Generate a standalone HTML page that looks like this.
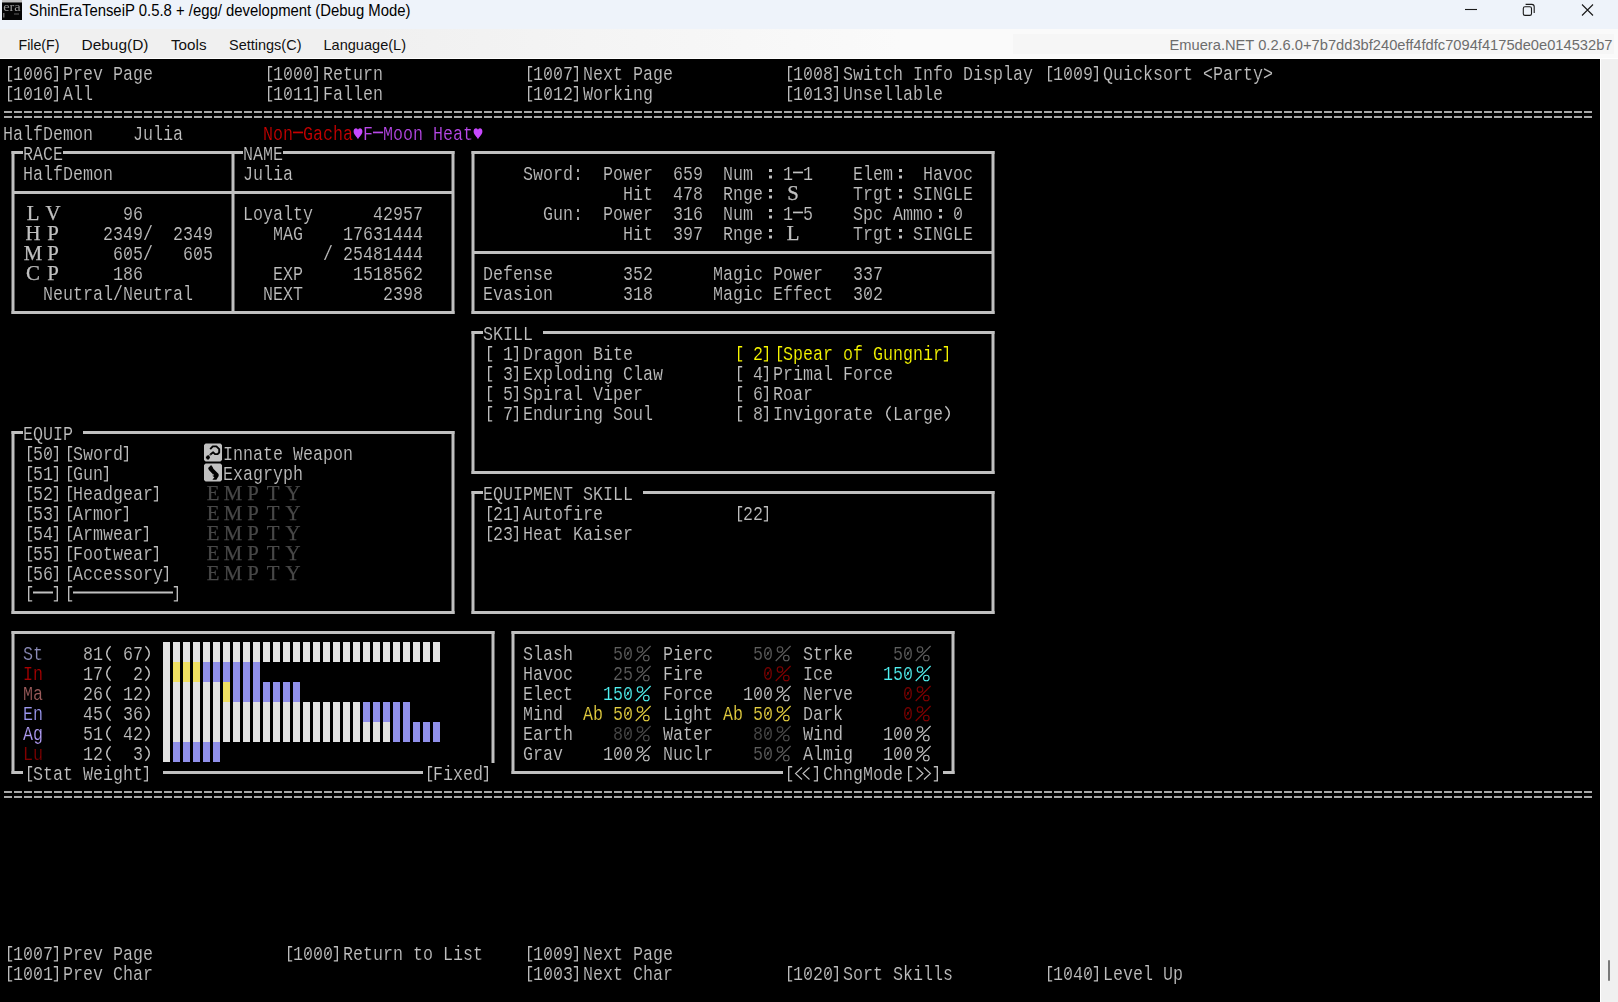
<!DOCTYPE html>
<html><head><meta charset="utf-8"><title>ShinEraTenseiP</title>
<style>
html,body{margin:0;padding:0;}
body{width:1618px;height:1002px;overflow:hidden;background:#000;position:relative;font-family:"Liberation Sans",sans-serif;}
#title{position:absolute;left:0;top:0;width:1618px;height:29px;background:#eef3fa;}
#menu{position:absolute;left:0;top:29px;width:1618px;height:30px;background:linear-gradient(90deg,#f0f0f0 0,#f0f0f0 380px,#fafafa 900px,#fafafa 100%);border-bottom:1px solid #fff;box-sizing:border-box;}
#title .tt{position:absolute;left:29px;top:1px;font-size:16.3px;line-height:20px;transform:scaleX(.9145);color:#000;white-space:pre;transform-origin:0 0;}
#menu span,#vv{position:absolute;top:7px;font-size:15px;line-height:18px;color:#111;white-space:pre;transform-origin:0 0;}
#ver{position:absolute;left:1013px;top:34px;width:600.5px;height:20px;background:#f6f6f6;}
#ver span{position:absolute;right:0;top:2px;color:#6d6d6d;transform-origin:100% 0;transform:scaleX(.976);line-height:18px;white-space:pre;}
#term{position:absolute;left:0;top:59px;width:1600px;height:943px;background:#000;}
#sb{position:absolute;left:1600px;top:59px;width:18px;height:943px;background:#f0f0f0;border-left:1px solid #fff;box-sizing:border-box;}
#sb i{position:absolute;left:7px;top:901px;width:2px;height:21px;background:#7a7a7a;border-radius:1px;}
.t,.fw{position:absolute;white-space:pre;color:#c0c0c0;font-size:20px;line-height:20px;height:20px;}
.t{font-family:"Liberation Mono",monospace;transform:scaleX(.8333);transform-origin:0 0;padding-top:2px;-webkit-text-stroke:.18px #000;}
.fw{font-family:"Liberation Serif",serif;width:20px;text-align:center;padding-top:0px;transform:scaleX(1.04);-webkit-text-stroke-width:.25px;color:#c0c0c0;}
svg#g{position:absolute;left:0;top:0;width:1618px;height:1002px;pointer-events:none;}
</style></head>
<body>
<div id="term"></div>
<div id="title">
<svg style="position:absolute;left:2px;top:0" width="20" height="20" viewBox="0 0 20 20"><defs><filter id="bl" x="-20%" y="-20%" width="140%" height="140%"><feGaussianBlur stdDeviation="0.45"/></filter></defs><rect x="0" y="0" width="20" height="20" fill="#050505"/><rect x="0" y="0" width="20" height="2" fill="#c0c0c0"/><rect x="0" y="2" width="20" height="1" fill="#5a5a5a"/><g filter="url(#bl)"><text x="1.200" y="10.800" font-family="Liberation Serif" font-size="11.500" fill="#9a9a9a" textLength="17.500" lengthAdjust="spacingAndGlyphs">era</text><rect x="1" y="13" width="1.500" height="4.500" fill="#6a6a6a"/><rect x="12" y="13" width="5" height="2" fill="#303030"/></g></svg>
<svg style="position:absolute;left:1460px;top:0" width="158" height="30" viewBox="0 0 158 30" fill="none" stroke="#1a1a1a" stroke-width="1.1">
<path d="M5 9.5H17"/>
<rect x="63.300" y="6.800" width="8.200" height="8.600" rx="1.700"/><path d="M65.600 4.400H71.800A2.400 2.400 0 0 1 74.200 6.800V13"/>
<path d="M122 4.500L133 15.500M133 4.500L122 15.500"/>
</svg>
</div>
<div id="menu"></div>
<div id="ver"></div>
<svg id="top" width="1618" height="59" viewBox="0 0 1618 59" style="position:absolute;left:0;top:0" font-family="Liberation Sans, sans-serif">
<text x="29" y="16.100" font-size="15.700" fill="#000" textLength="381.500" lengthAdjust="spacingAndGlyphs">ShinEraTenseiP 0.5.8 + /egg/ development (Debug Mode)</text>
<g font-size="15" fill="#111">
<text x="18.500" y="49.600" textLength="41" lengthAdjust="spacingAndGlyphs">File(F)</text>
<text x="81.500" y="49.600" textLength="67" lengthAdjust="spacingAndGlyphs">Debug(D)</text>
<text x="171" y="49.600" textLength="35.500" lengthAdjust="spacingAndGlyphs">Tools</text>
<text x="229" y="49.600" textLength="72.500" lengthAdjust="spacingAndGlyphs">Settings(C)</text>
<text x="323.500" y="49.600" textLength="82.500" lengthAdjust="spacingAndGlyphs">Language(L)</text>
</g>
<text x="1169.500" y="50" font-size="15" fill="#6d6d6d" textLength="443" lengthAdjust="spacingAndGlyphs">Emuera.NET 0.2.6.0+7b7dd3bf240eff4fdfc7094f4175de0e014532b7</text>
</svg>
<div id="sb"><i></i></div>
<span class="t" style="left:13px;top:63px;">1006 Prev Page</span>
<span class="t" style="left:273px;top:63px;">1000 Return</span>
<span class="t" style="left:533px;top:63px;">1007 Next Page</span>
<span class="t" style="left:793px;top:63px;">1008 Switch Info Display</span>
<span class="t" style="left:1053px;top:63px;">1009 Quicksort &lt;Party&gt;</span>
<span class="t" style="left:13px;top:83px;">1010 All</span>
<span class="t" style="left:273px;top:83px;">1011 Fallen</span>
<span class="t" style="left:533px;top:83px;">1012 Working</span>
<span class="t" style="left:793px;top:83px;">1013 Unsellable</span>
<span class="t" style="left:3px;top:123px;">HalfDemon</span>
<span class="t" style="left:133px;top:123px;">Julia</span>
<span class="t" style="left:263px;top:123px;color:#c80000;">Non</span>
<span class="t" style="left:303px;top:123px;color:#c80000;">Gacha</span>
<span class="t" style="left:363px;top:123px;color:#b848e8;">F</span>
<span class="t" style="left:383px;top:123px;color:#b848e8;">Moon Heat</span>
<span class="t" style="left:23px;top:143px;">RACE</span>
<span class="t" style="left:243px;top:143px;">NAME</span>
<span class="t" style="left:23px;top:163px;">HalfDemon</span>
<span class="t" style="left:243px;top:163px;">Julia</span>
<span class="fw" style="left:23px;top:203px;">L</span>
<span class="fw" style="left:43px;top:203px;">V</span>
<span class="t" style="left:123px;top:203px;">96</span>
<span class="t" style="left:243px;top:203px;">Loyalty</span>
<span class="t" style="left:373px;top:203px;">42957</span>
<span class="fw" style="left:23px;top:223px;">H</span>
<span class="fw" style="left:43px;top:223px;">P</span>
<span class="t" style="left:103px;top:223px;">2349/</span>
<span class="t" style="left:173px;top:223px;">2349</span>
<span class="t" style="left:273px;top:223px;">MAG</span>
<span class="t" style="left:343px;top:223px;">17631444</span>
<span class="fw" style="left:23px;top:243px;">M</span>
<span class="fw" style="left:43px;top:243px;">P</span>
<span class="t" style="left:113px;top:243px;">605/</span>
<span class="t" style="left:183px;top:243px;">605</span>
<span class="t" style="left:323px;top:243px;">/ 25481444</span>
<span class="fw" style="left:23px;top:263px;">C</span>
<span class="fw" style="left:43px;top:263px;">P</span>
<span class="t" style="left:113px;top:263px;">186</span>
<span class="t" style="left:273px;top:263px;">EXP</span>
<span class="t" style="left:353px;top:263px;">1518562</span>
<span class="t" style="left:43px;top:283px;">Neutral/Neutral</span>
<span class="t" style="left:263px;top:283px;">NEXT</span>
<span class="t" style="left:383px;top:283px;">2398</span>
<span class="t" style="left:523px;top:163px;">Sword:</span>
<span class="t" style="left:603px;top:163px;">Power</span>
<span class="t" style="left:673px;top:163px;">659</span>
<span class="t" style="left:723px;top:163px;">Num</span>
<span class="t" style="left:783px;top:163px;">1</span>
<span class="t" style="left:803px;top:163px;">1</span>
<span class="t" style="left:853px;top:163px;">Elem</span>
<span class="t" style="left:923px;top:163px;">Havoc</span>
<span class="t" style="left:623px;top:183px;">Hit</span>
<span class="t" style="left:673px;top:183px;">478</span>
<span class="t" style="left:723px;top:183px;">Rnge</span>
<span class="fw" style="left:783px;top:183px;">S</span>
<span class="t" style="left:853px;top:183px;">Trgt</span>
<span class="t" style="left:913px;top:183px;">SINGLE</span>
<span class="t" style="left:543px;top:203px;">Gun:</span>
<span class="t" style="left:603px;top:203px;">Power</span>
<span class="t" style="left:673px;top:203px;">316</span>
<span class="t" style="left:723px;top:203px;">Num</span>
<span class="t" style="left:783px;top:203px;">1</span>
<span class="t" style="left:803px;top:203px;">5</span>
<span class="t" style="left:853px;top:203px;">Spc Ammo</span>
<span class="t" style="left:953px;top:203px;">0</span>
<span class="t" style="left:623px;top:223px;">Hit</span>
<span class="t" style="left:673px;top:223px;">397</span>
<span class="t" style="left:723px;top:223px;">Rnge</span>
<span class="fw" style="left:783px;top:223px;">L</span>
<span class="t" style="left:853px;top:223px;">Trgt</span>
<span class="t" style="left:913px;top:223px;">SINGLE</span>
<span class="t" style="left:483px;top:263px;">Defense</span>
<span class="t" style="left:623px;top:263px;">352</span>
<span class="t" style="left:713px;top:263px;">Magic Power</span>
<span class="t" style="left:853px;top:263px;">337</span>
<span class="t" style="left:483px;top:283px;">Evasion</span>
<span class="t" style="left:623px;top:283px;">318</span>
<span class="t" style="left:713px;top:283px;">Magic Effect</span>
<span class="t" style="left:853px;top:283px;">302</span>
<span class="t" style="left:483px;top:323px;">SKILL</span>
<span class="t" style="left:503px;top:343px;">1 Dragon Bite</span>
<span class="t" style="left:753px;top:343px;color:#fafa00;">2</span>
<span class="t" style="left:783px;top:343px;color:#fafa00;">Spear of Gungnir</span>
<span class="t" style="left:503px;top:363px;">3 Exploding Claw</span>
<span class="t" style="left:753px;top:363px;">4 Primal Force</span>
<span class="t" style="left:503px;top:383px;">5 Spiral Viper</span>
<span class="t" style="left:753px;top:383px;">6 Roar</span>
<span class="t" style="left:503px;top:403px;">7 Enduring Soul</span>
<span class="t" style="left:753px;top:403px;">8 Invigorate</span>
<span class="t" style="left:893px;top:403px;">Large</span>
<span class="t" style="left:23px;top:423px;">EQUIP</span>
<span class="t" style="left:33px;top:443px;">50</span>
<span class="t" style="left:73px;top:443px;">Sword</span>
<span class="t" style="left:33px;top:463px;">51</span>
<span class="t" style="left:73px;top:463px;">Gun</span>
<span class="t" style="left:33px;top:483px;">52</span>
<span class="t" style="left:73px;top:483px;">Headgear</span>
<span class="fw" style="left:203px;top:483px;color:#484848;">E</span>
<span class="fw" style="left:223px;top:483px;color:#484848;">M</span>
<span class="fw" style="left:243px;top:483px;color:#484848;">P</span>
<span class="fw" style="left:263px;top:483px;color:#484848;">T</span>
<span class="fw" style="left:283px;top:483px;color:#484848;">Y</span>
<span class="t" style="left:33px;top:503px;">53</span>
<span class="t" style="left:73px;top:503px;">Armor</span>
<span class="fw" style="left:203px;top:503px;color:#484848;">E</span>
<span class="fw" style="left:223px;top:503px;color:#484848;">M</span>
<span class="fw" style="left:243px;top:503px;color:#484848;">P</span>
<span class="fw" style="left:263px;top:503px;color:#484848;">T</span>
<span class="fw" style="left:283px;top:503px;color:#484848;">Y</span>
<span class="t" style="left:33px;top:523px;">54</span>
<span class="t" style="left:73px;top:523px;">Armwear</span>
<span class="fw" style="left:203px;top:523px;color:#484848;">E</span>
<span class="fw" style="left:223px;top:523px;color:#484848;">M</span>
<span class="fw" style="left:243px;top:523px;color:#484848;">P</span>
<span class="fw" style="left:263px;top:523px;color:#484848;">T</span>
<span class="fw" style="left:283px;top:523px;color:#484848;">Y</span>
<span class="t" style="left:33px;top:543px;">55</span>
<span class="t" style="left:73px;top:543px;">Footwear</span>
<span class="fw" style="left:203px;top:543px;color:#484848;">E</span>
<span class="fw" style="left:223px;top:543px;color:#484848;">M</span>
<span class="fw" style="left:243px;top:543px;color:#484848;">P</span>
<span class="fw" style="left:263px;top:543px;color:#484848;">T</span>
<span class="fw" style="left:283px;top:543px;color:#484848;">Y</span>
<span class="t" style="left:33px;top:563px;">56</span>
<span class="t" style="left:73px;top:563px;">Accessory</span>
<span class="fw" style="left:203px;top:563px;color:#484848;">E</span>
<span class="fw" style="left:223px;top:563px;color:#484848;">M</span>
<span class="fw" style="left:243px;top:563px;color:#484848;">P</span>
<span class="fw" style="left:263px;top:563px;color:#484848;">T</span>
<span class="fw" style="left:283px;top:563px;color:#484848;">Y</span>
<span class="t" style="left:223px;top:443px;">Innate Weapon</span>
<span class="t" style="left:223px;top:463px;">Exagryph</span>
<span class="t" style="left:483px;top:483px;">EQUIPMENT SKILL</span>
<span class="t" style="left:493px;top:503px;">21 Autofire</span>
<span class="t" style="left:743px;top:503px;">22</span>
<span class="t" style="left:493px;top:523px;">23 Heat Kaiser</span>
<span class="t" style="left:33px;top:763px;">Stat Weight</span>
<span class="t" style="left:433px;top:763px;">Fixed</span>
<span class="t" style="left:23px;top:643px;color:#8c8cb8;">St</span>
<span class="t" style="left:83px;top:643px;">81</span>
<span class="t" style="left:123px;top:643px;">67</span>
<span class="t" style="left:23px;top:663px;color:#a80000;">In</span>
<span class="t" style="left:83px;top:663px;">17</span>
<span class="t" style="left:133px;top:663px;">2</span>
<span class="t" style="left:23px;top:683px;color:#9c5c5c;">Ma</span>
<span class="t" style="left:83px;top:683px;">26</span>
<span class="t" style="left:123px;top:683px;">12</span>
<span class="t" style="left:23px;top:703px;color:#9c98f0;">En</span>
<span class="t" style="left:83px;top:703px;">45</span>
<span class="t" style="left:123px;top:703px;">36</span>
<span class="t" style="left:23px;top:723px;color:#b09cf4;">Ag</span>
<span class="t" style="left:83px;top:723px;">51</span>
<span class="t" style="left:123px;top:723px;">42</span>
<span class="t" style="left:23px;top:743px;color:#800000;">Lu</span>
<span class="t" style="left:83px;top:743px;">12</span>
<span class="t" style="left:133px;top:743px;">3</span>
<span class="t" style="left:823px;top:763px;">ChngMode</span>
<span class="t" style="left:523px;top:643px;">Slash</span>
<span class="t" style="left:613px;top:643px;color:#5e5e5e;">50</span>
<span class="t" style="left:663px;top:643px;">Pierc</span>
<span class="t" style="left:753px;top:643px;color:#5e5e5e;">50</span>
<span class="t" style="left:803px;top:643px;">Strke</span>
<span class="t" style="left:893px;top:643px;color:#5e5e5e;">50</span>
<span class="t" style="left:523px;top:663px;">Havoc</span>
<span class="t" style="left:613px;top:663px;color:#5e5e5e;">25</span>
<span class="t" style="left:663px;top:663px;">Fire</span>
<span class="t" style="left:763px;top:663px;color:#800000;">0</span>
<span class="t" style="left:803px;top:663px;">Ice</span>
<span class="t" style="left:883px;top:663px;color:#50f0f0;">150</span>
<span class="t" style="left:523px;top:683px;">Elect</span>
<span class="t" style="left:603px;top:683px;color:#50f0f0;">150</span>
<span class="t" style="left:663px;top:683px;">Force</span>
<span class="t" style="left:743px;top:683px;color:#c0c0c0;">100</span>
<span class="t" style="left:803px;top:683px;">Nerve</span>
<span class="t" style="left:903px;top:683px;color:#800000;">0</span>
<span class="t" style="left:523px;top:703px;">Mind</span>
<span class="t" style="left:583px;top:703px;color:#e6d040;">Ab 50</span>
<span class="t" style="left:663px;top:703px;">Light</span>
<span class="t" style="left:723px;top:703px;color:#e6d040;">Ab 50</span>
<span class="t" style="left:803px;top:703px;">Dark</span>
<span class="t" style="left:903px;top:703px;color:#800000;">0</span>
<span class="t" style="left:523px;top:723px;">Earth</span>
<span class="t" style="left:613px;top:723px;color:#4c4c4c;">80</span>
<span class="t" style="left:663px;top:723px;">Water</span>
<span class="t" style="left:753px;top:723px;color:#4c4c4c;">80</span>
<span class="t" style="left:803px;top:723px;">Wind</span>
<span class="t" style="left:883px;top:723px;color:#c0c0c0;">100</span>
<span class="t" style="left:523px;top:743px;">Grav</span>
<span class="t" style="left:603px;top:743px;color:#c0c0c0;">100</span>
<span class="t" style="left:663px;top:743px;">Nuclr</span>
<span class="t" style="left:753px;top:743px;color:#5e5e5e;">50</span>
<span class="t" style="left:803px;top:743px;">Almig</span>
<span class="t" style="left:883px;top:743px;color:#c0c0c0;">100</span>
<span class="t" style="left:13px;top:943px;">1007 Prev Page</span>
<span class="t" style="left:293px;top:943px;">1000 Return to List</span>
<span class="t" style="left:533px;top:943px;">1009 Next Page</span>
<span class="t" style="left:13px;top:963px;">1001 Prev Char</span>
<span class="t" style="left:533px;top:963px;">1003 Next Char</span>
<span class="t" style="left:793px;top:963px;">1020 Sort Skills</span>
<span class="t" style="left:1053px;top:963px;">1040 Level Up</span>
<svg id="g" viewBox="0 0 1618 1002">
<path d="M12.2 66.7H8.7V80.8H12.2" stroke="#c0c0c0" stroke-width="1.35" fill="none"/>
<path d="M53.8 66.7H57.3V80.8H53.8" stroke="#c0c0c0" stroke-width="1.35" fill="none"/>
<path d="M26.3 76L30.2 70" stroke="#c0c0c0" stroke-width="1" stroke-opacity=".85" fill="none"/>
<path d="M36.3 76L40.2 70" stroke="#c0c0c0" stroke-width="1" stroke-opacity=".85" fill="none"/>
<path d="M272.2 66.7H268.7V80.8H272.2" stroke="#c0c0c0" stroke-width="1.35" fill="none"/>
<path d="M313.8 66.7H317.3V80.8H313.8" stroke="#c0c0c0" stroke-width="1.35" fill="none"/>
<path d="M286.3 76L290.2 70" stroke="#c0c0c0" stroke-width="1" stroke-opacity=".85" fill="none"/>
<path d="M296.3 76L300.2 70" stroke="#c0c0c0" stroke-width="1" stroke-opacity=".85" fill="none"/>
<path d="M306.3 76L310.2 70" stroke="#c0c0c0" stroke-width="1" stroke-opacity=".85" fill="none"/>
<path d="M532.2 66.7H528.7V80.8H532.2" stroke="#c0c0c0" stroke-width="1.35" fill="none"/>
<path d="M573.8 66.7H577.3V80.8H573.8" stroke="#c0c0c0" stroke-width="1.35" fill="none"/>
<path d="M546.3 76L550.2 70" stroke="#c0c0c0" stroke-width="1" stroke-opacity=".85" fill="none"/>
<path d="M556.3 76L560.2 70" stroke="#c0c0c0" stroke-width="1" stroke-opacity=".85" fill="none"/>
<path d="M792.2 66.7H788.7V80.8H792.2" stroke="#c0c0c0" stroke-width="1.35" fill="none"/>
<path d="M833.8 66.7H837.3V80.8H833.8" stroke="#c0c0c0" stroke-width="1.35" fill="none"/>
<path d="M806.3 76L810.2 70" stroke="#c0c0c0" stroke-width="1" stroke-opacity=".85" fill="none"/>
<path d="M816.3 76L820.2 70" stroke="#c0c0c0" stroke-width="1" stroke-opacity=".85" fill="none"/>
<path d="M1052.2 66.7H1048.7V80.8H1052.2" stroke="#c0c0c0" stroke-width="1.35" fill="none"/>
<path d="M1093.8 66.7H1097.3V80.8H1093.8" stroke="#c0c0c0" stroke-width="1.35" fill="none"/>
<path d="M1066.3 76L1070.2 70" stroke="#c0c0c0" stroke-width="1" stroke-opacity=".85" fill="none"/>
<path d="M1076.3 76L1080.2 70" stroke="#c0c0c0" stroke-width="1" stroke-opacity=".85" fill="none"/>
<path d="M12.2 86.7H8.7V100.8H12.2" stroke="#c0c0c0" stroke-width="1.35" fill="none"/>
<path d="M53.8 86.7H57.3V100.8H53.8" stroke="#c0c0c0" stroke-width="1.35" fill="none"/>
<path d="M26.3 96L30.2 90" stroke="#c0c0c0" stroke-width="1" stroke-opacity=".85" fill="none"/>
<path d="M46.3 96L50.2 90" stroke="#c0c0c0" stroke-width="1" stroke-opacity=".85" fill="none"/>
<path d="M272.2 86.7H268.7V100.8H272.2" stroke="#c0c0c0" stroke-width="1.35" fill="none"/>
<path d="M313.8 86.7H317.3V100.8H313.8" stroke="#c0c0c0" stroke-width="1.35" fill="none"/>
<path d="M286.3 96L290.2 90" stroke="#c0c0c0" stroke-width="1" stroke-opacity=".85" fill="none"/>
<path d="M532.2 86.7H528.7V100.8H532.2" stroke="#c0c0c0" stroke-width="1.35" fill="none"/>
<path d="M573.8 86.7H577.3V100.8H573.8" stroke="#c0c0c0" stroke-width="1.35" fill="none"/>
<path d="M546.3 96L550.2 90" stroke="#c0c0c0" stroke-width="1" stroke-opacity=".85" fill="none"/>
<path d="M792.2 86.7H788.7V100.8H792.2" stroke="#c0c0c0" stroke-width="1.35" fill="none"/>
<path d="M833.8 86.7H837.3V100.8H833.8" stroke="#c0c0c0" stroke-width="1.35" fill="none"/>
<path d="M806.3 96L810.2 90" stroke="#c0c0c0" stroke-width="1" stroke-opacity=".85" fill="none"/>
<path d="M4 112H1593M4 117H1593" stroke="#a8a8a8" stroke-width="2" stroke-dasharray="8 2" fill="none"/>
<path d="M4 792H1593M4 797H1593" stroke="#a8a8a8" stroke-width="2" stroke-dasharray="8 2" fill="none"/>
<path d="M293 131.6h10v1.7h-10z" fill="#c80000"/>
<path transform="translate(353.6,128.2)" fill="#c848ff" d="M4.4 11 C3.6 8.6 0 6.6 0 3.2 C0 1.2 1.2 0 2.4 0 C3.5 0 4.1 0.8 4.4 1.6 C4.7 0.8 5.3 0 6.4 0 C7.6 0 8.8 1.2 8.8 3.2 C8.8 6.6 5.2 8.6 4.4 11Z"/>
<path d="M373 131.6h10v1.7h-10z" fill="#b848e8"/>
<path transform="translate(473.6,128.2)" fill="#c848ff" d="M4.4 11 C3.6 8.6 0 6.6 0 3.2 C0 1.2 1.2 0 2.4 0 C3.5 0 4.1 0.8 4.4 1.6 C4.7 0.8 5.3 0 6.4 0 C7.6 0 8.8 1.2 8.8 3.2 C8.8 6.6 5.2 8.6 4.4 11Z"/>
<path d="M11.5 152.5H23" stroke="#c0c0c0" stroke-width="3"/>
<path d="M63 152.5H243" stroke="#c0c0c0" stroke-width="3"/>
<path d="M283 152.5H454.5" stroke="#c0c0c0" stroke-width="3"/>
<path d="M13 151V314" stroke="#c0c0c0" stroke-width="3"/>
<path d="M453 151V314" stroke="#c0c0c0" stroke-width="3"/>
<path d="M233 151V314" stroke="#c0c0c0" stroke-width="3"/>
<path d="M13 192.5H453" stroke="#c0c0c0" stroke-width="3"/>
<path d="M11.5 312.5H454.5" stroke="#c0c0c0" stroke-width="3"/>
<path d="M126.3 256L130.2 250" stroke="#c0c0c0" stroke-width="1" stroke-opacity=".85" fill="none"/>
<path d="M196.3 256L200.2 250" stroke="#c0c0c0" stroke-width="1" stroke-opacity=".85" fill="none"/>
<path d="M471.5 152.5H994.5" stroke="#c0c0c0" stroke-width="3"/>
<path d="M473 151V314" stroke="#c0c0c0" stroke-width="3"/>
<path d="M993 151V314" stroke="#c0c0c0" stroke-width="3"/>
<path d="M473 252.5H993" stroke="#c0c0c0" stroke-width="3"/>
<path d="M471.5 312.5H994.5" stroke="#c0c0c0" stroke-width="3"/>
<path d="M769 169h3v3h-3zM769 175.5h3v3h-3z" fill="#c0c0c0"/>
<path d="M793 171.6h10v1.7h-10z" fill="#c0c0c0"/>
<path d="M899 169h3v3h-3zM899 175.5h3v3h-3z" fill="#c0c0c0"/>
<path d="M769 189h3v3h-3zM769 195.5h3v3h-3z" fill="#c0c0c0"/>
<path d="M899 189h3v3h-3zM899 195.5h3v3h-3z" fill="#c0c0c0"/>
<path d="M769 209h3v3h-3zM769 215.5h3v3h-3z" fill="#c0c0c0"/>
<path d="M793 211.6h10v1.7h-10z" fill="#c0c0c0"/>
<path d="M939 209h3v3h-3zM939 215.5h3v3h-3z" fill="#c0c0c0"/>
<path d="M956.3 216L960.2 210" stroke="#c0c0c0" stroke-width="1" stroke-opacity=".85" fill="none"/>
<path d="M769 229h3v3h-3zM769 235.5h3v3h-3z" fill="#c0c0c0"/>
<path d="M899 229h3v3h-3zM899 235.5h3v3h-3z" fill="#c0c0c0"/>
<path d="M866.3 296L870.2 290" stroke="#c0c0c0" stroke-width="1" stroke-opacity=".85" fill="none"/>
<path d="M471.5 332.5H483" stroke="#c0c0c0" stroke-width="3"/>
<path d="M543 332.5H994.5" stroke="#c0c0c0" stroke-width="3"/>
<path d="M473 331V474" stroke="#c0c0c0" stroke-width="3"/>
<path d="M993 331V474" stroke="#c0c0c0" stroke-width="3"/>
<path d="M471.5 472.5H994.5" stroke="#c0c0c0" stroke-width="3"/>
<path d="M492.2 346.7H488.7V360.8H492.2" stroke="#c0c0c0" stroke-width="1.35" fill="none"/>
<path d="M513.8 346.7H517.3V360.8H513.8" stroke="#c0c0c0" stroke-width="1.35" fill="none"/>
<path d="M742.2 346.7H738.7V360.8H742.2" stroke="#fafa00" stroke-width="1.35" fill="none"/>
<path d="M763.8 346.7H767.3V360.8H763.8" stroke="#fafa00" stroke-width="1.35" fill="none"/>
<path d="M782.2 346.7H778.7V360.8H782.2" stroke="#fafa00" stroke-width="1.35" fill="none"/>
<path d="M943.8 346.7H947.3V360.8H943.8" stroke="#fafa00" stroke-width="1.35" fill="none"/>
<path d="M492.2 366.7H488.7V380.8H492.2" stroke="#c0c0c0" stroke-width="1.35" fill="none"/>
<path d="M513.8 366.7H517.3V380.8H513.8" stroke="#c0c0c0" stroke-width="1.35" fill="none"/>
<path d="M742.2 366.7H738.7V380.8H742.2" stroke="#c0c0c0" stroke-width="1.35" fill="none"/>
<path d="M763.8 366.7H767.3V380.8H763.8" stroke="#c0c0c0" stroke-width="1.35" fill="none"/>
<path d="M492.2 386.7H488.7V400.8H492.2" stroke="#c0c0c0" stroke-width="1.35" fill="none"/>
<path d="M513.8 386.7H517.3V400.8H513.8" stroke="#c0c0c0" stroke-width="1.35" fill="none"/>
<path d="M742.2 386.7H738.7V400.8H742.2" stroke="#c0c0c0" stroke-width="1.35" fill="none"/>
<path d="M763.8 386.7H767.3V400.8H763.8" stroke="#c0c0c0" stroke-width="1.35" fill="none"/>
<path d="M492.2 406.7H488.7V420.8H492.2" stroke="#c0c0c0" stroke-width="1.35" fill="none"/>
<path d="M513.8 406.7H517.3V420.8H513.8" stroke="#c0c0c0" stroke-width="1.35" fill="none"/>
<path d="M742.2 406.7H738.7V420.8H742.2" stroke="#c0c0c0" stroke-width="1.35" fill="none"/>
<path d="M763.8 406.7H767.3V420.8H763.8" stroke="#c0c0c0" stroke-width="1.35" fill="none"/>
<path d="M890.6 406.2Q882.8 413.5 890.6 420.8" stroke="#c0c0c0" stroke-width="1.35" fill="none"/>
<path d="M945.4 406.2Q953.2 413.5 945.4 420.8" stroke="#c0c0c0" stroke-width="1.35" fill="none"/>
<path d="M11.5 432.5H23" stroke="#c0c0c0" stroke-width="3"/>
<path d="M83 432.5H454.5" stroke="#c0c0c0" stroke-width="3"/>
<path d="M13 431V614" stroke="#c0c0c0" stroke-width="3"/>
<path d="M453 431V614" stroke="#c0c0c0" stroke-width="3"/>
<path d="M11.5 612.5H454.5" stroke="#c0c0c0" stroke-width="3"/>
<path d="M32.2 446.7H28.7V460.8H32.2" stroke="#c0c0c0" stroke-width="1.35" fill="none"/>
<path d="M53.8 446.7H57.3V460.8H53.8" stroke="#c0c0c0" stroke-width="1.35" fill="none"/>
<path d="M72.2 446.7H68.7V460.8H72.2" stroke="#c0c0c0" stroke-width="1.35" fill="none"/>
<path d="M123.8 446.7H127.3V460.8H123.8" stroke="#c0c0c0" stroke-width="1.35" fill="none"/>
<path d="M46.3 456L50.2 450" stroke="#c0c0c0" stroke-width="1" stroke-opacity=".85" fill="none"/>
<path d="M32.2 466.7H28.7V480.8H32.2" stroke="#c0c0c0" stroke-width="1.35" fill="none"/>
<path d="M53.8 466.7H57.3V480.8H53.8" stroke="#c0c0c0" stroke-width="1.35" fill="none"/>
<path d="M72.2 466.7H68.7V480.8H72.2" stroke="#c0c0c0" stroke-width="1.35" fill="none"/>
<path d="M103.8 466.7H107.3V480.8H103.8" stroke="#c0c0c0" stroke-width="1.35" fill="none"/>
<path d="M32.2 486.7H28.7V500.8H32.2" stroke="#c0c0c0" stroke-width="1.35" fill="none"/>
<path d="M53.8 486.7H57.3V500.8H53.8" stroke="#c0c0c0" stroke-width="1.35" fill="none"/>
<path d="M72.2 486.7H68.7V500.8H72.2" stroke="#c0c0c0" stroke-width="1.35" fill="none"/>
<path d="M153.8 486.7H157.3V500.8H153.8" stroke="#c0c0c0" stroke-width="1.35" fill="none"/>
<path d="M32.2 506.7H28.7V520.8H32.2" stroke="#c0c0c0" stroke-width="1.35" fill="none"/>
<path d="M53.8 506.7H57.3V520.8H53.8" stroke="#c0c0c0" stroke-width="1.35" fill="none"/>
<path d="M72.2 506.7H68.7V520.8H72.2" stroke="#c0c0c0" stroke-width="1.35" fill="none"/>
<path d="M123.8 506.7H127.3V520.8H123.8" stroke="#c0c0c0" stroke-width="1.35" fill="none"/>
<path d="M32.2 526.7H28.7V540.8H32.2" stroke="#c0c0c0" stroke-width="1.35" fill="none"/>
<path d="M53.8 526.7H57.3V540.8H53.8" stroke="#c0c0c0" stroke-width="1.35" fill="none"/>
<path d="M72.2 526.7H68.7V540.8H72.2" stroke="#c0c0c0" stroke-width="1.35" fill="none"/>
<path d="M143.8 526.7H147.3V540.8H143.8" stroke="#c0c0c0" stroke-width="1.35" fill="none"/>
<path d="M32.2 546.7H28.7V560.8H32.2" stroke="#c0c0c0" stroke-width="1.35" fill="none"/>
<path d="M53.8 546.7H57.3V560.8H53.8" stroke="#c0c0c0" stroke-width="1.35" fill="none"/>
<path d="M72.2 546.7H68.7V560.8H72.2" stroke="#c0c0c0" stroke-width="1.35" fill="none"/>
<path d="M153.8 546.7H157.3V560.8H153.8" stroke="#c0c0c0" stroke-width="1.35" fill="none"/>
<path d="M32.2 566.7H28.7V580.8H32.2" stroke="#c0c0c0" stroke-width="1.35" fill="none"/>
<path d="M53.8 566.7H57.3V580.8H53.8" stroke="#c0c0c0" stroke-width="1.35" fill="none"/>
<path d="M72.2 566.7H68.7V580.8H72.2" stroke="#c0c0c0" stroke-width="1.35" fill="none"/>
<path d="M163.8 566.7H167.3V580.8H163.8" stroke="#c0c0c0" stroke-width="1.35" fill="none"/>
<path d="M32.2 586.7H28.7V600.8H32.2" stroke="#c0c0c0" stroke-width="1.35" fill="none"/>
<path d="M53.8 586.7H57.3V600.8H53.8" stroke="#c0c0c0" stroke-width="1.35" fill="none"/>
<path d="M72.2 586.7H68.7V600.8H72.2" stroke="#c0c0c0" stroke-width="1.35" fill="none"/>
<path d="M173.8 586.7H177.3V600.8H173.8" stroke="#c0c0c0" stroke-width="1.35" fill="none"/>
<path d="M33 592.5H53M73 592.5H173" stroke="#c0c0c0" stroke-width="2"/>
<g transform="translate(204,443.5)"><path d="M1.6 0H16.4L18 1.6V16.4L16.4 18H1.6L0 16.4V1.6Z" fill="#c0c0c0"/><path d="M6.2 5.6L8.8 2.9H12.4L15.2 5.6V9L13.6 10.6H11L9.2 8.8L6.4 11" stroke="#000" stroke-width="1.9" fill="none" stroke-linejoin="round"/><path d="M6.4 11L4.6 12.8" stroke="#000" stroke-width="1.2" stroke-dasharray="1 0.8" fill="none"/><path d="M3.9 11.9V16.1M1.9 14H5.9" stroke="#000" stroke-width="2.2" fill="none"/></g>
<g transform="translate(204,463.5)"><path d="M1.6 0H16.4L18 1.6V16.4L16.4 18H1.6L0 16.4V1.6Z" fill="#c0c0c0"/><path d="M7.1 1.5L4.1 4.6L4.9 6.5L9.4 11.2L8.6 12.4L10.4 13.8L8.4 16.2H12.4L14.7 12.4L14.6 10.6L9.4 5.2L8.6 3.4Z" fill="#000"/><circle cx="8.9" cy="11.4" r="0.9" fill="#9a9a9a"/></g>
<path d="M471.5 492.5H483" stroke="#c0c0c0" stroke-width="3"/>
<path d="M643 492.5H994.5" stroke="#c0c0c0" stroke-width="3"/>
<path d="M473 491V614" stroke="#c0c0c0" stroke-width="3"/>
<path d="M993 491V614" stroke="#c0c0c0" stroke-width="3"/>
<path d="M471.5 612.5H994.5" stroke="#c0c0c0" stroke-width="3"/>
<path d="M492.2 506.7H488.7V520.8H492.2" stroke="#c0c0c0" stroke-width="1.35" fill="none"/>
<path d="M513.8 506.7H517.3V520.8H513.8" stroke="#c0c0c0" stroke-width="1.35" fill="none"/>
<path d="M742.2 506.7H738.7V520.8H742.2" stroke="#c0c0c0" stroke-width="1.35" fill="none"/>
<path d="M763.8 506.7H767.3V520.8H763.8" stroke="#c0c0c0" stroke-width="1.35" fill="none"/>
<path d="M492.2 526.7H488.7V540.8H492.2" stroke="#c0c0c0" stroke-width="1.35" fill="none"/>
<path d="M513.8 526.7H517.3V540.8H513.8" stroke="#c0c0c0" stroke-width="1.35" fill="none"/>
<path d="M11.5 632.5H494.5" stroke="#c0c0c0" stroke-width="3"/>
<path d="M13 631V774" stroke="#c0c0c0" stroke-width="3"/>
<path d="M493 631V763" stroke="#c0c0c0" stroke-width="3"/>
<path d="M11.5 772.5H23" stroke="#c0c0c0" stroke-width="3"/>
<path d="M32.2 766.7H28.7V780.8H32.2" stroke="#c0c0c0" stroke-width="1.35" fill="none"/>
<path d="M143.8 766.7H147.3V780.8H143.8" stroke="#c0c0c0" stroke-width="1.35" fill="none"/>
<path d="M163 772.5H423" stroke="#c0c0c0" stroke-width="3"/>
<path d="M432.2 766.7H428.7V780.8H432.2" stroke="#c0c0c0" stroke-width="1.35" fill="none"/>
<path d="M483.8 766.7H487.3V780.8H483.8" stroke="#c0c0c0" stroke-width="1.35" fill="none"/>
<path d="M110.6 646.2Q102.8 653.5 110.6 660.8" stroke="#c0c0c0" stroke-width="1.35" fill="none"/>
<path d="M145.4 646.2Q153.2 653.5 145.4 660.8" stroke="#c0c0c0" stroke-width="1.35" fill="none"/>
<rect x="163" y="642" width="7" height="20" fill="#e2e2e2"/>
<rect x="173" y="642" width="7" height="20" fill="#e2e2e2"/>
<rect x="183" y="642" width="7" height="20" fill="#e2e2e2"/>
<rect x="193" y="642" width="7" height="20" fill="#e2e2e2"/>
<rect x="203" y="642" width="7" height="20" fill="#e2e2e2"/>
<rect x="213" y="642" width="7" height="20" fill="#e2e2e2"/>
<rect x="223" y="642" width="7" height="20" fill="#e2e2e2"/>
<rect x="233" y="642" width="7" height="20" fill="#e2e2e2"/>
<rect x="243" y="642" width="7" height="20" fill="#e2e2e2"/>
<rect x="253" y="642" width="7" height="20" fill="#e2e2e2"/>
<rect x="263" y="642" width="7" height="20" fill="#e2e2e2"/>
<rect x="273" y="642" width="7" height="20" fill="#e2e2e2"/>
<rect x="283" y="642" width="7" height="20" fill="#e2e2e2"/>
<rect x="293" y="642" width="7" height="20" fill="#e2e2e2"/>
<rect x="303" y="642" width="7" height="20" fill="#e2e2e2"/>
<rect x="313" y="642" width="7" height="20" fill="#e2e2e2"/>
<rect x="323" y="642" width="7" height="20" fill="#e2e2e2"/>
<rect x="333" y="642" width="7" height="20" fill="#e2e2e2"/>
<rect x="343" y="642" width="7" height="20" fill="#e2e2e2"/>
<rect x="353" y="642" width="7" height="20" fill="#e2e2e2"/>
<rect x="363" y="642" width="7" height="20" fill="#e2e2e2"/>
<rect x="373" y="642" width="7" height="20" fill="#e2e2e2"/>
<rect x="383" y="642" width="7" height="20" fill="#e2e2e2"/>
<rect x="393" y="642" width="7" height="20" fill="#e2e2e2"/>
<rect x="403" y="642" width="7" height="20" fill="#e2e2e2"/>
<rect x="413" y="642" width="7" height="20" fill="#e2e2e2"/>
<rect x="423" y="642" width="7" height="20" fill="#e2e2e2"/>
<rect x="433" y="642" width="7" height="20" fill="#e2e2e2"/>
<path d="M110.6 666.2Q102.8 673.5 110.6 680.8" stroke="#c0c0c0" stroke-width="1.35" fill="none"/>
<path d="M145.4 666.2Q153.2 673.5 145.4 680.8" stroke="#c0c0c0" stroke-width="1.35" fill="none"/>
<rect x="163" y="662" width="7" height="20" fill="#e2e2e2"/>
<rect x="173" y="662" width="7" height="20" fill="#f0e062"/>
<rect x="183" y="662" width="7" height="20" fill="#f0e062"/>
<rect x="193" y="662" width="7" height="20" fill="#f0e062"/>
<rect x="203" y="662" width="7" height="20" fill="#9090ea"/>
<rect x="213" y="662" width="7" height="20" fill="#9090ea"/>
<rect x="223" y="662" width="7" height="20" fill="#9090ea"/>
<rect x="233" y="662" width="7" height="20" fill="#9090ea"/>
<rect x="243" y="662" width="7" height="20" fill="#9090ea"/>
<rect x="253" y="662" width="7" height="20" fill="#9090ea"/>
<path d="M110.6 686.2Q102.8 693.5 110.6 700.8" stroke="#c0c0c0" stroke-width="1.35" fill="none"/>
<path d="M145.4 686.2Q153.2 693.5 145.4 700.8" stroke="#c0c0c0" stroke-width="1.35" fill="none"/>
<rect x="163" y="682" width="7" height="20" fill="#e2e2e2"/>
<rect x="173" y="682" width="7" height="20" fill="#e2e2e2"/>
<rect x="183" y="682" width="7" height="20" fill="#e2e2e2"/>
<rect x="193" y="682" width="7" height="20" fill="#e2e2e2"/>
<rect x="203" y="682" width="7" height="20" fill="#e2e2e2"/>
<rect x="213" y="682" width="7" height="20" fill="#e2e2e2"/>
<rect x="223" y="682" width="7" height="20" fill="#f0e062"/>
<rect x="233" y="682" width="7" height="20" fill="#9090ea"/>
<rect x="243" y="682" width="7" height="20" fill="#9090ea"/>
<rect x="253" y="682" width="7" height="20" fill="#9090ea"/>
<rect x="263" y="682" width="7" height="20" fill="#9090ea"/>
<rect x="273" y="682" width="7" height="20" fill="#9090ea"/>
<rect x="283" y="682" width="7" height="20" fill="#9090ea"/>
<rect x="293" y="682" width="7" height="20" fill="#9090ea"/>
<path d="M110.6 706.2Q102.8 713.5 110.6 720.8" stroke="#c0c0c0" stroke-width="1.35" fill="none"/>
<path d="M145.4 706.2Q153.2 713.5 145.4 720.8" stroke="#c0c0c0" stroke-width="1.35" fill="none"/>
<rect x="163" y="702" width="7" height="20" fill="#e2e2e2"/>
<rect x="173" y="702" width="7" height="20" fill="#e2e2e2"/>
<rect x="183" y="702" width="7" height="20" fill="#e2e2e2"/>
<rect x="193" y="702" width="7" height="20" fill="#e2e2e2"/>
<rect x="203" y="702" width="7" height="20" fill="#e2e2e2"/>
<rect x="213" y="702" width="7" height="20" fill="#e2e2e2"/>
<rect x="223" y="702" width="7" height="20" fill="#e2e2e2"/>
<rect x="233" y="702" width="7" height="20" fill="#e2e2e2"/>
<rect x="243" y="702" width="7" height="20" fill="#e2e2e2"/>
<rect x="253" y="702" width="7" height="20" fill="#e2e2e2"/>
<rect x="263" y="702" width="7" height="20" fill="#e2e2e2"/>
<rect x="273" y="702" width="7" height="20" fill="#e2e2e2"/>
<rect x="283" y="702" width="7" height="20" fill="#e2e2e2"/>
<rect x="293" y="702" width="7" height="20" fill="#e2e2e2"/>
<rect x="303" y="702" width="7" height="20" fill="#e2e2e2"/>
<rect x="313" y="702" width="7" height="20" fill="#e2e2e2"/>
<rect x="323" y="702" width="7" height="20" fill="#e2e2e2"/>
<rect x="333" y="702" width="7" height="20" fill="#e2e2e2"/>
<rect x="343" y="702" width="7" height="20" fill="#e2e2e2"/>
<rect x="353" y="702" width="7" height="20" fill="#e2e2e2"/>
<rect x="363" y="702" width="7" height="20" fill="#9090ea"/>
<rect x="373" y="702" width="7" height="20" fill="#9090ea"/>
<rect x="383" y="702" width="7" height="20" fill="#9090ea"/>
<rect x="393" y="702" width="7" height="20" fill="#9090ea"/>
<rect x="403" y="702" width="7" height="20" fill="#9090ea"/>
<path d="M110.6 726.2Q102.8 733.5 110.6 740.8" stroke="#c0c0c0" stroke-width="1.35" fill="none"/>
<path d="M145.4 726.2Q153.2 733.5 145.4 740.8" stroke="#c0c0c0" stroke-width="1.35" fill="none"/>
<rect x="163" y="722" width="7" height="20" fill="#e2e2e2"/>
<rect x="173" y="722" width="7" height="20" fill="#e2e2e2"/>
<rect x="183" y="722" width="7" height="20" fill="#e2e2e2"/>
<rect x="193" y="722" width="7" height="20" fill="#e2e2e2"/>
<rect x="203" y="722" width="7" height="20" fill="#e2e2e2"/>
<rect x="213" y="722" width="7" height="20" fill="#e2e2e2"/>
<rect x="223" y="722" width="7" height="20" fill="#e2e2e2"/>
<rect x="233" y="722" width="7" height="20" fill="#e2e2e2"/>
<rect x="243" y="722" width="7" height="20" fill="#e2e2e2"/>
<rect x="253" y="722" width="7" height="20" fill="#e2e2e2"/>
<rect x="263" y="722" width="7" height="20" fill="#e2e2e2"/>
<rect x="273" y="722" width="7" height="20" fill="#e2e2e2"/>
<rect x="283" y="722" width="7" height="20" fill="#e2e2e2"/>
<rect x="293" y="722" width="7" height="20" fill="#e2e2e2"/>
<rect x="303" y="722" width="7" height="20" fill="#e2e2e2"/>
<rect x="313" y="722" width="7" height="20" fill="#e2e2e2"/>
<rect x="323" y="722" width="7" height="20" fill="#e2e2e2"/>
<rect x="333" y="722" width="7" height="20" fill="#e2e2e2"/>
<rect x="343" y="722" width="7" height="20" fill="#e2e2e2"/>
<rect x="353" y="722" width="7" height="20" fill="#e2e2e2"/>
<rect x="363" y="722" width="7" height="20" fill="#e2e2e2"/>
<rect x="373" y="722" width="7" height="20" fill="#e2e2e2"/>
<rect x="383" y="722" width="7" height="20" fill="#e2e2e2"/>
<rect x="393" y="722" width="7" height="20" fill="#9090ea"/>
<rect x="403" y="722" width="7" height="20" fill="#9090ea"/>
<rect x="413" y="722" width="7" height="20" fill="#9090ea"/>
<rect x="423" y="722" width="7" height="20" fill="#9090ea"/>
<rect x="433" y="722" width="7" height="20" fill="#9090ea"/>
<path d="M110.6 746.2Q102.8 753.5 110.6 760.8" stroke="#c0c0c0" stroke-width="1.35" fill="none"/>
<path d="M145.4 746.2Q153.2 753.5 145.4 760.8" stroke="#c0c0c0" stroke-width="1.35" fill="none"/>
<rect x="163" y="742" width="7" height="20" fill="#e2e2e2"/>
<rect x="173" y="742" width="7" height="20" fill="#9090ea"/>
<rect x="183" y="742" width="7" height="20" fill="#9090ea"/>
<rect x="193" y="742" width="7" height="20" fill="#9090ea"/>
<rect x="203" y="742" width="7" height="20" fill="#9090ea"/>
<rect x="213" y="742" width="7" height="20" fill="#9090ea"/>
<path d="M511.5 632.5H954.5" stroke="#c0c0c0" stroke-width="3"/>
<path d="M513 631V774" stroke="#c0c0c0" stroke-width="3"/>
<path d="M953 631V774" stroke="#c0c0c0" stroke-width="3"/>
<path d="M511.5 772.5H783" stroke="#c0c0c0" stroke-width="3"/>
<path d="M943 772.5H954.5" stroke="#c0c0c0" stroke-width="3"/>
<path d="M792.2 766.7H788.7V780.8H792.2" stroke="#c0c0c0" stroke-width="1.35" fill="none"/>
<path d="M813.8 766.7H817.3V780.8H813.8" stroke="#c0c0c0" stroke-width="1.35" fill="none"/>
<path d="M912.2 766.7H908.7V780.8H912.2" stroke="#c0c0c0" stroke-width="1.35" fill="none"/>
<path d="M933.8 766.7H937.3V780.8H933.8" stroke="#c0c0c0" stroke-width="1.35" fill="none"/>
<path d="M802 767.5L795.5 773.5L802 779.5M809.5 767.5L803 773.5L809.5 779.5" stroke="#c0c0c0" stroke-width="1.1" fill="none"/>
<path d="M916.5 767.5L923 773.5L916.5 779.5M924 767.5L930.5 773.5L924 779.5" stroke="#c0c0c0" stroke-width="1.1" fill="none"/>
<path d="M626.3 656L630.2 650" stroke="#5e5e5e" stroke-width="1" stroke-opacity=".85" fill="none"/>
<g transform="translate(633,643)" stroke="#5e5e5e" stroke-width="1.1" fill="none"><circle cx="7" cy="6.5" r="2.8"/><circle cx="13.3" cy="15" r="2.8"/><path d="M2.7 18L17.6 3"/></g>
<path d="M766.3 656L770.2 650" stroke="#5e5e5e" stroke-width="1" stroke-opacity=".85" fill="none"/>
<g transform="translate(773,643)" stroke="#5e5e5e" stroke-width="1.1" fill="none"><circle cx="7" cy="6.5" r="2.8"/><circle cx="13.3" cy="15" r="2.8"/><path d="M2.7 18L17.6 3"/></g>
<path d="M906.3 656L910.2 650" stroke="#5e5e5e" stroke-width="1" stroke-opacity=".85" fill="none"/>
<g transform="translate(913,643)" stroke="#5e5e5e" stroke-width="1.1" fill="none"><circle cx="7" cy="6.5" r="2.8"/><circle cx="13.3" cy="15" r="2.8"/><path d="M2.7 18L17.6 3"/></g>
<g transform="translate(633,663)" stroke="#5e5e5e" stroke-width="1.1" fill="none"><circle cx="7" cy="6.5" r="2.8"/><circle cx="13.3" cy="15" r="2.8"/><path d="M2.7 18L17.6 3"/></g>
<path d="M766.3 676L770.2 670" stroke="#800000" stroke-width="1" stroke-opacity=".85" fill="none"/>
<g transform="translate(773,663)" stroke="#800000" stroke-width="1.1" fill="none"><circle cx="7" cy="6.5" r="2.8"/><circle cx="13.3" cy="15" r="2.8"/><path d="M2.7 18L17.6 3"/></g>
<path d="M906.3 676L910.2 670" stroke="#50f0f0" stroke-width="1" stroke-opacity=".85" fill="none"/>
<g transform="translate(913,663)" stroke="#50f0f0" stroke-width="1.1" fill="none"><circle cx="7" cy="6.5" r="2.8"/><circle cx="13.3" cy="15" r="2.8"/><path d="M2.7 18L17.6 3"/></g>
<path d="M626.3 696L630.2 690" stroke="#50f0f0" stroke-width="1" stroke-opacity=".85" fill="none"/>
<g transform="translate(633,683)" stroke="#50f0f0" stroke-width="1.1" fill="none"><circle cx="7" cy="6.5" r="2.8"/><circle cx="13.3" cy="15" r="2.8"/><path d="M2.7 18L17.6 3"/></g>
<path d="M756.3 696L760.2 690" stroke="#c0c0c0" stroke-width="1" stroke-opacity=".85" fill="none"/>
<path d="M766.3 696L770.2 690" stroke="#c0c0c0" stroke-width="1" stroke-opacity=".85" fill="none"/>
<g transform="translate(773,683)" stroke="#c0c0c0" stroke-width="1.1" fill="none"><circle cx="7" cy="6.5" r="2.8"/><circle cx="13.3" cy="15" r="2.8"/><path d="M2.7 18L17.6 3"/></g>
<path d="M906.3 696L910.2 690" stroke="#800000" stroke-width="1" stroke-opacity=".85" fill="none"/>
<g transform="translate(913,683)" stroke="#800000" stroke-width="1.1" fill="none"><circle cx="7" cy="6.5" r="2.8"/><circle cx="13.3" cy="15" r="2.8"/><path d="M2.7 18L17.6 3"/></g>
<path d="M626.3 716L630.2 710" stroke="#e6d040" stroke-width="1" stroke-opacity=".85" fill="none"/>
<g transform="translate(633,703)" stroke="#e6d040" stroke-width="1.1" fill="none"><circle cx="7" cy="6.5" r="2.8"/><circle cx="13.3" cy="15" r="2.8"/><path d="M2.7 18L17.6 3"/></g>
<path d="M766.3 716L770.2 710" stroke="#e6d040" stroke-width="1" stroke-opacity=".85" fill="none"/>
<g transform="translate(773,703)" stroke="#e6d040" stroke-width="1.1" fill="none"><circle cx="7" cy="6.5" r="2.8"/><circle cx="13.3" cy="15" r="2.8"/><path d="M2.7 18L17.6 3"/></g>
<path d="M906.3 716L910.2 710" stroke="#800000" stroke-width="1" stroke-opacity=".85" fill="none"/>
<g transform="translate(913,703)" stroke="#800000" stroke-width="1.1" fill="none"><circle cx="7" cy="6.5" r="2.8"/><circle cx="13.3" cy="15" r="2.8"/><path d="M2.7 18L17.6 3"/></g>
<path d="M626.3 736L630.2 730" stroke="#4c4c4c" stroke-width="1" stroke-opacity=".85" fill="none"/>
<g transform="translate(633,723)" stroke="#4c4c4c" stroke-width="1.1" fill="none"><circle cx="7" cy="6.5" r="2.8"/><circle cx="13.3" cy="15" r="2.8"/><path d="M2.7 18L17.6 3"/></g>
<path d="M766.3 736L770.2 730" stroke="#4c4c4c" stroke-width="1" stroke-opacity=".85" fill="none"/>
<g transform="translate(773,723)" stroke="#4c4c4c" stroke-width="1.1" fill="none"><circle cx="7" cy="6.5" r="2.8"/><circle cx="13.3" cy="15" r="2.8"/><path d="M2.7 18L17.6 3"/></g>
<path d="M896.3 736L900.2 730" stroke="#c0c0c0" stroke-width="1" stroke-opacity=".85" fill="none"/>
<path d="M906.3 736L910.2 730" stroke="#c0c0c0" stroke-width="1" stroke-opacity=".85" fill="none"/>
<g transform="translate(913,723)" stroke="#c0c0c0" stroke-width="1.1" fill="none"><circle cx="7" cy="6.5" r="2.8"/><circle cx="13.3" cy="15" r="2.8"/><path d="M2.7 18L17.6 3"/></g>
<path d="M616.3 756L620.2 750" stroke="#c0c0c0" stroke-width="1" stroke-opacity=".85" fill="none"/>
<path d="M626.3 756L630.2 750" stroke="#c0c0c0" stroke-width="1" stroke-opacity=".85" fill="none"/>
<g transform="translate(633,743)" stroke="#c0c0c0" stroke-width="1.1" fill="none"><circle cx="7" cy="6.5" r="2.8"/><circle cx="13.3" cy="15" r="2.8"/><path d="M2.7 18L17.6 3"/></g>
<path d="M766.3 756L770.2 750" stroke="#5e5e5e" stroke-width="1" stroke-opacity=".85" fill="none"/>
<g transform="translate(773,743)" stroke="#5e5e5e" stroke-width="1.1" fill="none"><circle cx="7" cy="6.5" r="2.8"/><circle cx="13.3" cy="15" r="2.8"/><path d="M2.7 18L17.6 3"/></g>
<path d="M896.3 756L900.2 750" stroke="#c0c0c0" stroke-width="1" stroke-opacity=".85" fill="none"/>
<path d="M906.3 756L910.2 750" stroke="#c0c0c0" stroke-width="1" stroke-opacity=".85" fill="none"/>
<g transform="translate(913,743)" stroke="#c0c0c0" stroke-width="1.1" fill="none"><circle cx="7" cy="6.5" r="2.8"/><circle cx="13.3" cy="15" r="2.8"/><path d="M2.7 18L17.6 3"/></g>
<path d="M12.2 946.7H8.7V960.8H12.2" stroke="#c0c0c0" stroke-width="1.35" fill="none"/>
<path d="M53.8 946.7H57.3V960.8H53.8" stroke="#c0c0c0" stroke-width="1.35" fill="none"/>
<path d="M26.3 956L30.2 950" stroke="#c0c0c0" stroke-width="1" stroke-opacity=".85" fill="none"/>
<path d="M36.3 956L40.2 950" stroke="#c0c0c0" stroke-width="1" stroke-opacity=".85" fill="none"/>
<path d="M292.2 946.7H288.7V960.8H292.2" stroke="#c0c0c0" stroke-width="1.35" fill="none"/>
<path d="M333.8 946.7H337.3V960.8H333.8" stroke="#c0c0c0" stroke-width="1.35" fill="none"/>
<path d="M306.3 956L310.2 950" stroke="#c0c0c0" stroke-width="1" stroke-opacity=".85" fill="none"/>
<path d="M316.3 956L320.2 950" stroke="#c0c0c0" stroke-width="1" stroke-opacity=".85" fill="none"/>
<path d="M326.3 956L330.2 950" stroke="#c0c0c0" stroke-width="1" stroke-opacity=".85" fill="none"/>
<path d="M532.2 946.7H528.7V960.8H532.2" stroke="#c0c0c0" stroke-width="1.35" fill="none"/>
<path d="M573.8 946.7H577.3V960.8H573.8" stroke="#c0c0c0" stroke-width="1.35" fill="none"/>
<path d="M546.3 956L550.2 950" stroke="#c0c0c0" stroke-width="1" stroke-opacity=".85" fill="none"/>
<path d="M556.3 956L560.2 950" stroke="#c0c0c0" stroke-width="1" stroke-opacity=".85" fill="none"/>
<path d="M12.2 966.7H8.7V980.8H12.2" stroke="#c0c0c0" stroke-width="1.35" fill="none"/>
<path d="M53.8 966.7H57.3V980.8H53.8" stroke="#c0c0c0" stroke-width="1.35" fill="none"/>
<path d="M26.3 976L30.2 970" stroke="#c0c0c0" stroke-width="1" stroke-opacity=".85" fill="none"/>
<path d="M36.3 976L40.2 970" stroke="#c0c0c0" stroke-width="1" stroke-opacity=".85" fill="none"/>
<path d="M532.2 966.7H528.7V980.8H532.2" stroke="#c0c0c0" stroke-width="1.35" fill="none"/>
<path d="M573.8 966.7H577.3V980.8H573.8" stroke="#c0c0c0" stroke-width="1.35" fill="none"/>
<path d="M546.3 976L550.2 970" stroke="#c0c0c0" stroke-width="1" stroke-opacity=".85" fill="none"/>
<path d="M556.3 976L560.2 970" stroke="#c0c0c0" stroke-width="1" stroke-opacity=".85" fill="none"/>
<path d="M792.2 966.7H788.7V980.8H792.2" stroke="#c0c0c0" stroke-width="1.35" fill="none"/>
<path d="M833.8 966.7H837.3V980.8H833.8" stroke="#c0c0c0" stroke-width="1.35" fill="none"/>
<path d="M806.3 976L810.2 970" stroke="#c0c0c0" stroke-width="1" stroke-opacity=".85" fill="none"/>
<path d="M826.3 976L830.2 970" stroke="#c0c0c0" stroke-width="1" stroke-opacity=".85" fill="none"/>
<path d="M1052.2 966.7H1048.7V980.8H1052.2" stroke="#c0c0c0" stroke-width="1.35" fill="none"/>
<path d="M1093.8 966.7H1097.3V980.8H1093.8" stroke="#c0c0c0" stroke-width="1.35" fill="none"/>
<path d="M1066.3 976L1070.2 970" stroke="#c0c0c0" stroke-width="1" stroke-opacity=".85" fill="none"/>
<path d="M1086.3 976L1090.2 970" stroke="#c0c0c0" stroke-width="1" stroke-opacity=".85" fill="none"/>
</svg>
</body></html>
